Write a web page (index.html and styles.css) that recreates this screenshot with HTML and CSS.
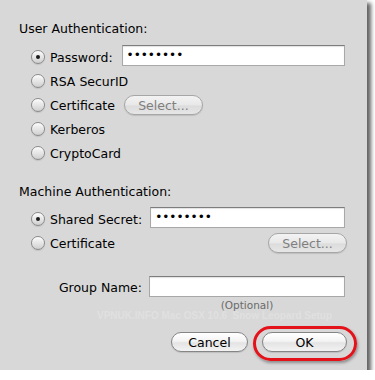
FILE: index.html
```html
<!DOCTYPE html>
<html>
<head>
<meta charset="utf-8">
<link rel="stylesheet" href="styles.css">
</head>
<body>
<div class="panel">
  <div class="heading">User Authentication:</div>
  <div class="options">
    <div class="row">
      <span class="radio on"></span><span class="label">Password:</span>
      <div class="field pw">••••••••</div>
    </div>
    <div class="row"><span class="radio"></span><span class="label">RSA SecurID</span></div>
    <div class="row">
      <span class="radio"></span><span class="label">Certificate</span>
      <span class="btn disabled sel1">Select...</span>
    </div>
    <div class="row"><span class="radio"></span><span class="label">Kerberos</span></div>
    <div class="row"><span class="radio"></span><span class="label">CryptoCard</span></div>
  </div>

  <div class="heading second">Machine Authentication:</div>
  <div class="options opt2">
    <div class="row">
      <span class="radio on"></span><span class="label">Shared Secret:</span>
      <div class="field ss">••••••••</div>
    </div>
    <div class="row">
      <span class="radio"></span><span class="label">Certificate</span>
      <span class="btn disabled sel2">Select...</span>
    </div>
  </div>

  <div class="group">
    <span class="glabel">Group Name:</span>
    <div class="field gn"></div>
  </div>
  <div class="optional">(Optional)</div>
  <div class="watermark">VPNUK.INFO Mac OSX 10.6&nbsp; Snow Leopard Setup</div>
  <div class="buttons">
    <span class="btn cancel">Cancel</span>
    <span class="okwrap"><span class="btn ok">OK</span></span>
  </div>
</div>
</body>
</html>
```
FILE: styles.css
```css
html, body {
  margin: 0;
  padding: 0;
  background: #ffffff;
}
.panel {
  width: 367px;
  height: 370px;
  box-sizing: border-box;
  padding: 20px 22px 0 19px;
  background: #d8d8d8;
  box-shadow: 3px 4px 4px 1px rgba(0, 0, 0, 0.62);
  font-family: "DejaVu Sans", sans-serif;
  font-size: 12.5px;
  color: #000;
  display: flex;
  flex-direction: column;
}
.heading {
  height: 18px;
  line-height: 18px;
}
.heading.second {
  margin-top: 18px;
}
.options {
  margin-top: 7px;
  padding-left: 12px;
}
.options.opt2 {
  margin-top: 6px;
}
.row {
  display: flex;
  align-items: center;
  height: 24px;
}
.radio {
  width: 14px;
  height: 14px;
  box-sizing: border-box;
  border-radius: 50%;
  border: 1px solid #8a8a8a;
  background: linear-gradient(#fbfbfb, #e6e6e6 50%, #cfcfcf);
  box-shadow: inset 0 1px 1px rgba(255, 255, 255, 0.9), 0 1px 1px rgba(0, 0, 0, 0.1);
  margin-right: 5px;
  position: relative;
  flex: none;
}
.radio.on::after {
  content: "";
  position: absolute;
  left: 4px;
  top: 4px;
  width: 4px;
  height: 4px;
  border-radius: 50%;
  background: #1a1a1a;
}
.label {
  white-space: nowrap;
}
.field {
  height: 21px;
  box-sizing: border-box;
  background: #ffffff;
  border: 1px solid #a8a8a8;
  border-top-color: #7d7d7d;
  box-shadow: inset 0 1px 1px rgba(0, 0, 0, 0.12);
  font-size: 12px;
  line-height: 19px;
  padding-left: 4px;
  color: #000;
  flex: 1;
}
.field.pw {
  margin-left: 9px;
  margin-bottom: 3px;
}
.field.ss {
  margin-left: 8px;
  margin-bottom: 3px;
}
.btn {
  display: inline-flex;
  align-items: center;
  justify-content: center;
  height: 20px;
  box-sizing: border-box;
  border-radius: 10px;
  border: 1px solid #858585;
  background: linear-gradient(#ffffff, #f4f4f4 45%, #e4e4e4 55%, #f3f3f3);
  box-shadow: 0 1px 1px rgba(0, 0, 0, 0.12);
  font-size: 12.5px;
  color: #000;
  flex: none;
}
.btn.disabled {
  color: #7f7f7f;
  border-color: #a6a6a6;
  background: linear-gradient(#f3f3f3, #e8e8e8 50%, #dcdcdc 55%, #e6e6e6);
  width: 79px;
}
.sel1 {
  margin-left: 9px;
}
.sel2 {
  margin-left: auto;
  margin-right: -2px;
}
.group {
  margin-top: 20px;
  height: 24px;
  display: flex;
  align-items: center;
}
.glabel {
  width: 123px;
  text-align: right;
  margin-right: 7px;
  flex: none;
}
.field.gn {
  margin-bottom: 2px;
}
.optional {
  margin-left: 130px;
  text-align: center;
  font-size: 10.5px;
  line-height: 12px;
  color: #6a6a6a;
}
.watermark {
  padding-left: 78px;
  font-family: "Liberation Sans", Arial, sans-serif;
  font-weight: bold;
  font-size: 10px;
  line-height: 10px;
  color: #e0e0e0;
  white-space: nowrap;
}
.buttons {
  margin-top: 11px;
  margin-right: -2px;
  display: flex;
  justify-content: flex-end;
  gap: 14px;
}
.btn.cancel {
  width: 77px;
}
.okwrap {
  position: relative;
  display: inline-flex;
}
.btn.ok {
  width: 85px;
}
.okwrap::after {
  content: "";
  position: absolute;
  left: -9px;
  right: -10px;
  top: -6px;
  bottom: -9px;
  border: 3.5px solid #e4121a;
  border-radius: 18px;
  box-shadow: 1px 2px 3px rgba(0, 0, 0, 0.35);
  pointer-events: none;
}
```
